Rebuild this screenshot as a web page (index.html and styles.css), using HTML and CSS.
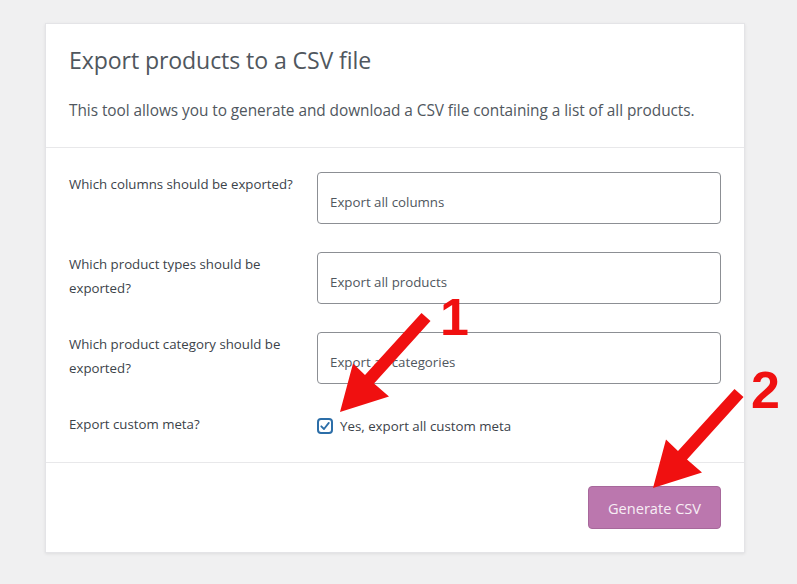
FILE: index.html
```html
<!DOCTYPE html>
<html lang="en">
<head>
<meta charset="utf-8">
<title>Export products</title>
<link rel="stylesheet" href="styles.css">
</head>
<body>
<div class="page">
  <div class="card">
    <header class="card-head">
      <h2 class="title">Export products to a CSV file</h2>
      <p class="desc">This tool allows you to generate and download a CSV file containing a list of all products.</p>
    </header>
    <section class="card-body">
      <div class="row">
        <div class="label">Which columns should be exported?</div>
        <div class="field">Export all columns</div>
      </div>
      <div class="row">
        <div class="label">Which product types should be exported?</div>
        <div class="field">Export all products</div>
      </div>
      <div class="row">
        <div class="label">Which product category should be exported?</div>
        <div class="field">Export all categories</div>
      </div>
      <div class="row row-check">
        <div class="label">Export custom meta?</div>
        <label class="check">
          <span class="box"><svg viewBox="0 0 16 16" width="16" height="16"><rect x="1" y="1" width="14" height="14" rx="3" fill="#fff" stroke="#2c6ea8" stroke-width="2"/><path d="M4.3 8.3 L7 11 L11.8 4.9" fill="none" stroke="#2c6ea8" stroke-width="1.8" stroke-linecap="round" stroke-linejoin="round"/></svg></span>
          <span>Yes, export all custom meta</span>
        </label>
      </div>
    </section>
    <footer class="card-foot">
      <button class="btn">Generate CSV</button>
    </footer>
  </div>
</div>
<svg class="overlay" width="797" height="584" viewBox="0 0 797 584">
  <g fill="#f01010">
    <polygon points="421.5,313 430.5,321 374,383.5 389,396.5 340,412 353,363.5 365,375"/>
    <polygon transform="translate(313,76)" points="421.5,313 430.5,321 374,383.5 389,396.5 340,412 353,363.5 365,375"/>
  </g>
  <g fill="#f01010" font-family="'Liberation Sans', Arial, sans-serif" font-weight="700" font-size="52">
    <text x="440" y="335">1</text>
    <text x="751" y="408">2</text>
  </g>
</svg>
</body>
</html>
```
FILE: styles.css
```css
* { box-sizing: border-box; }
html, body { margin: 0; padding: 0; }
body {
  background: #f0f0f1;
  font-family: "Open Sans", "Noto Sans", sans-serif;
  color: #3c434a;
  width: 797px;
  height: 584px;
  overflow: hidden;
  position: relative;
}
.page {
  padding: 23px 0 0 45px;
}
.card {
  width: 700px;
  height: 530px;
  background: #fff;
  border: 1px solid #e4e4e7;
  box-shadow: 0 1px 3px rgba(0,0,0,0.08);
  display: flex;
  flex-direction: column;
}
.card-head {
  padding: 21px 23px 0 23px;
  height: 124px;
  border-bottom: 1px solid #e8e8ea;
}
.title {
  margin: 0;
  font-weight: 400;
  font-size: 23.1px;
  line-height: 30px;
  color: #50575e;
  letter-spacing: -0.1px;
}
.desc {
  margin: 24px 0 0;
  font-size: 15.4px;
  line-height: 24px;
  color: #50575e;
  letter-spacing: -0.05px;
}
.card-body {
  padding: 24px 23px 0 23px;
  height: 315px;
  border-bottom: 1px solid #e8e8ea;
  display: flex;
  flex-direction: column;
  gap: 28px;
}
.row {
  display: flex;
  align-items: flex-start;
}
.label {
  width: 248px;
  padding-right: 20px;
  font-size: 13.25px;
  line-height: 24px;
  color: #3c434a;
}
.field {
  width: 404px;
  height: 52px;
  border: 1px solid #8c8f94;
  border-radius: 4px;
  padding: 17px 12px 0 12px;
  font-size: 13.3px;
  line-height: 24px;
  color: #50575e;
}
.check {
  display: flex;
  align-items: center;
  gap: 7px;
  font-size: 13.3px;
  line-height: 24px;
  color: #3c434a;
  margin-top: 2px;
}
.box { display: flex; }
.card-foot {
  flex: 1;
  display: flex;
  justify-content: flex-end;
  align-items: flex-start;
  padding: 23px 23px 0 0;
}
.btn {
  width: 133px;
  height: 43px;
  background: #bb77ae;
  border: 1px solid #a7689b;
  border-radius: 4px;
  color: #f7eef5;
  font-family: "Open Sans", "Noto Sans", sans-serif;
  font-size: 14.6px;
  padding: 0;
}
.overlay {
  position: absolute;
  left: 0;
  top: 0;
  pointer-events: none;
}
```
